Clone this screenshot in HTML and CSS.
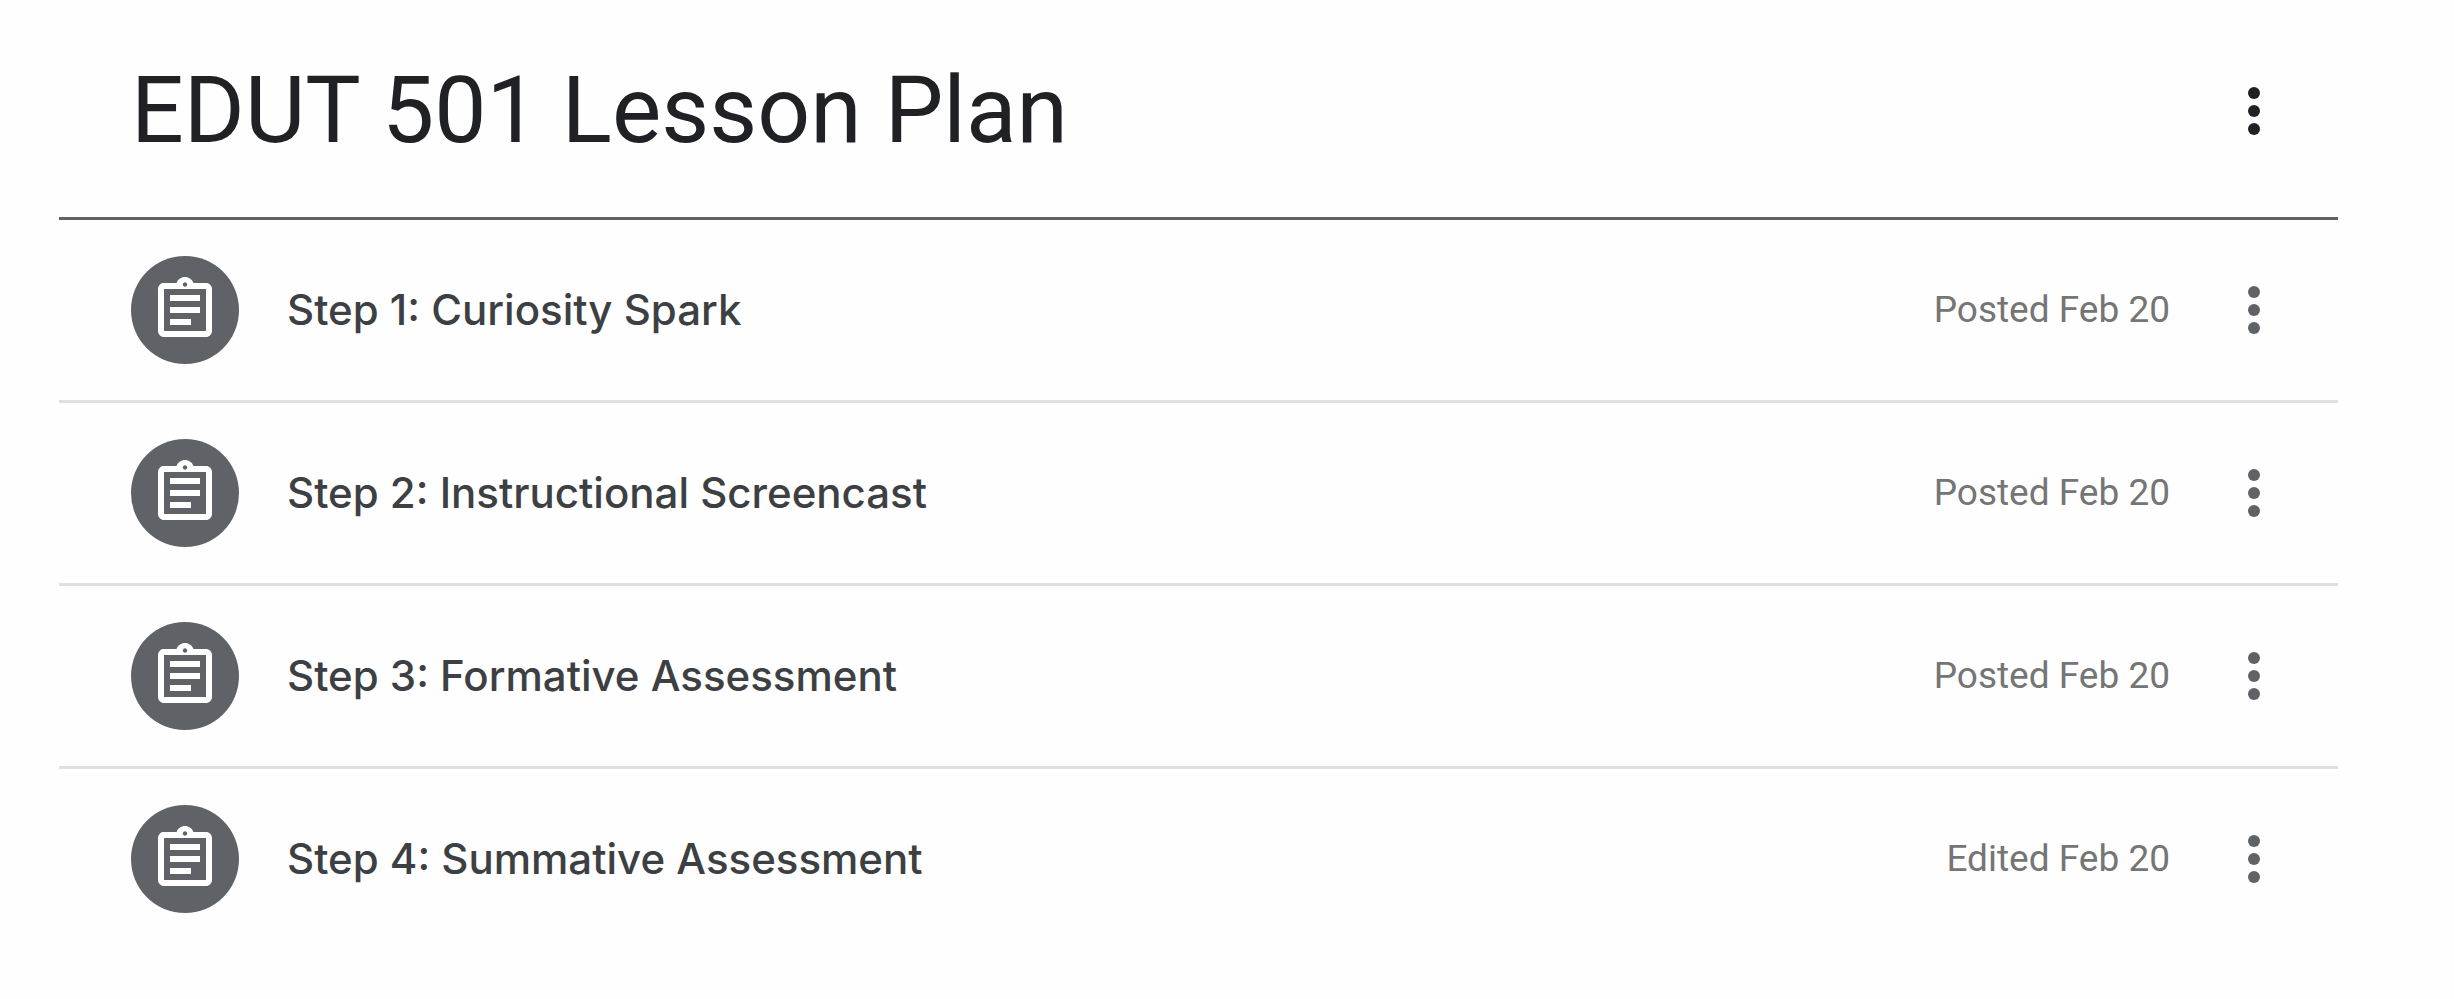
FILE: index.html
```html
<!DOCTYPE html>
<html lang="en">
<head>
<meta charset="utf-8">
<meta name="viewport" content="width=device-width, initial-scale=1">
<title>EDUT 501 Lesson Plan</title>
<link rel="stylesheet" href="styles.css">
</head>
<body>
<svg class="sprite" aria-hidden="true">
  <symbol id="more" viewBox="0 0 24 24"><circle cx="12" cy="6" r="2"/><circle cx="12" cy="12" r="2"/><circle cx="12" cy="18" r="2"/></symbol>
  <symbol id="assignment" viewBox="0 0 24 24"><path d="M7 15h7v2H7zm0-4h10v2H7zm0-4h10v2H7zm12-4h-4.18C14.4 1.84 13.3 1 12 1c-1.3 0-2.4.84-2.82 2H5c-.14 0-.27.01-.4.04-.39.08-.74.28-1.01.55-.18.18-.33.4-.43.64-.1.23-.16.49-.16.77v14c0 .27.06.54.16.78s.25.45.43.64c.27.27.62.47 1.01.55.13.02.26.03.4.03h14c1.1 0 2-.9 2-2V5c0-1.1-.9-2-2-2zm-7-.25c.41 0 .75.34.75.75s-.34.75-.75.75-.75-.34-.75-.75.34-.75.75-.75zM19 19H5V5h14v14z"/></symbol>
</svg>
<main class="topic">
  <header class="topic-header">
    <h1 class="topic-title">EDUT 501 Lesson Plan</h1>
    <button class="more" type="button" aria-label="Topic options"><svg class="icon"><use href="#more"/></svg></button>
  </header>
  <ul class="list">
    <li class="row">
      <span class="badge"><svg class="icon" aria-hidden="true"><use href="#assignment"/></svg></span>
      <h2 class="row-title">Step 1: Curiosity Spark</h2>
      <span class="date">Posted Feb 20</span>
      <button class="more" type="button" aria-label="Options for Step 1"><svg class="icon"><use href="#more"/></svg></button>
    </li>
    <li class="row">
      <span class="badge"><svg class="icon" aria-hidden="true"><use href="#assignment"/></svg></span>
      <h2 class="row-title">Step 2: Instructional Screencast</h2>
      <span class="date">Posted Feb 20</span>
      <button class="more" type="button" aria-label="Options for Step 2"><svg class="icon"><use href="#more"/></svg></button>
    </li>
    <li class="row">
      <span class="badge"><svg class="icon" aria-hidden="true"><use href="#assignment"/></svg></span>
      <h2 class="row-title">Step 3: Formative Assessment</h2>
      <span class="date">Posted Feb 20</span>
      <button class="more" type="button" aria-label="Options for Step 3"><svg class="icon"><use href="#more"/></svg></button>
    </li>
    <li class="row">
      <span class="badge"><svg class="icon" aria-hidden="true"><use href="#assignment"/></svg></span>
      <h2 class="row-title">Step 4: Summative Assessment</h2>
      <span class="date">Edited Feb 20</span>
      <button class="more" type="button" aria-label="Options for Step 4"><svg class="icon"><use href="#more"/></svg></button>
    </li>
  </ul>
</main>
</body>
</html>
```
FILE: styles.css
```css
* { box-sizing: border-box; }

body {
  margin: 0;
  background: #fefefe;
  color: #3c4043;
  font-family: Inter, Roboto, sans-serif;
}

.sprite { display: none; }

.topic { padding: 3px 116px 0 59px; }

.topic-header,
.row {
  display: flex;
  align-items: center;
  padding: 36px 48px 36px 72px;
}

.topic-header {
  justify-content: space-between;
  padding-bottom: 34px;
  border-bottom: 3px solid #5f6368;
}

.topic-title {
  margin: 0;
  color: #202124;
  font-family: Roboto, sans-serif;
  font-size: 93px;
  font-weight: 400;
  line-height: 144px;
}

.list {
  margin: 0;
  padding: 0;
  list-style: none;
}

.row + .row { border-top: 3px solid #e0e0e0; }

.badge {
  display: flex;
  align-items: center;
  justify-content: center;
  flex: none;
  width: 108px;
  height: 108px;
  border-radius: 50%;
  background: #5f6368;
  color: #fff;
}

.icon {
  display: block;
  width: 72px;
  height: 72px;
  fill: currentColor;
}

.row-title {
  flex: 1;
  margin: 0 48px;
  font-size: 42px;
  font-weight: 500;
  line-height: 60px;
}

.date {
  margin-right: 48px;
  color: #757575;
  font-family: Roboto, sans-serif;
  font-size: 37px;
  line-height: 48px;
}

.more {
  flex: none;
  padding: 0;
  border: 0;
  background: none;
  color: #5f6368;
  cursor: pointer;
}

.topic-header .more { color: #202124; }
```
